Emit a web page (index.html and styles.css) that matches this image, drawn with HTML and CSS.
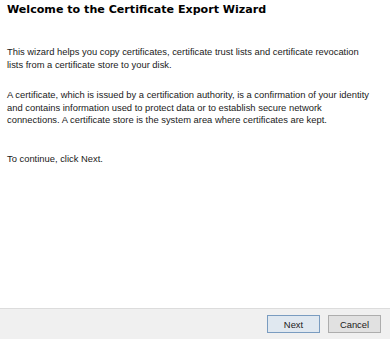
FILE: index.html
```html
<!DOCTYPE html>
<html lang="en">
<head>
  <meta charset="UTF-8">
  <title>Certificate Export Wizard</title>
  <link rel="stylesheet" href="styles.css">
</head>
<body>
  <div class="wizard">
    <div class="content">
      <h1>Welcome to the Certificate Export Wizard</h1>
      <p class="first">This wizard helps you copy certificates, certificate trust lists and certificate revocation<br>lists from a certificate store to your disk.</p>
      <p>A certificate, which is issued by a certification authority, is a confirmation of your identity<br>and contains information used to protect data or to establish secure network<br>connections. A certificate store is the system area where certificates are kept.</p>
      <p class="last">To continue, click Next.</p>
    </div>
    <div class="footer">
      <button type="button" class="default">Next</button>
      <button type="button">Cancel</button>
    </div>
  </div>
</body>
</html>
```

FILE: styles.css
```css
body {
  margin: 0;
  background: #fff;
  font-family: "Liberation Sans", Arial, sans-serif;
  color: #1a1a1a;
}
.wizard {
  height: 339px;
  display: flex;
  flex-direction: column;
}
.content {
  flex: 1;
  padding: 3px 7px 0 7px;
}
h1 {
  margin: 0;
  font-family: "DejaVu Sans", Verdana, sans-serif;
  font-size: 11.1px;
  font-weight: bold;
  color: #000;
  line-height: 14px;
}
p {
  margin: 18px 0 0 0;
  font-size: 9.4px;
  line-height: 12.5px;
  white-space: nowrap;
}
p.first {
  margin-top: 29px;
}
p.last {
  margin-top: 26px;
}
.footer {
  height: 30px;
  background: #f0f0f0;
  border-top: 1px solid #dcdcdc;
  display: flex;
  justify-content: flex-end;
  align-items: center;
  gap: 8px;
  padding: 0 9px 0 0;
}
button {
  width: 53px;
  height: 18px;
  padding: 0;
  font-family: "Liberation Sans", Arial, sans-serif;
  font-size: 9.4px;
  color: #1a1a1a;
  background: #e1e1e1;
  border: 1px solid #adadad;
}
button.default {
  background: #e0e8f0;
  border-color: #7a9cc0;
}
```
